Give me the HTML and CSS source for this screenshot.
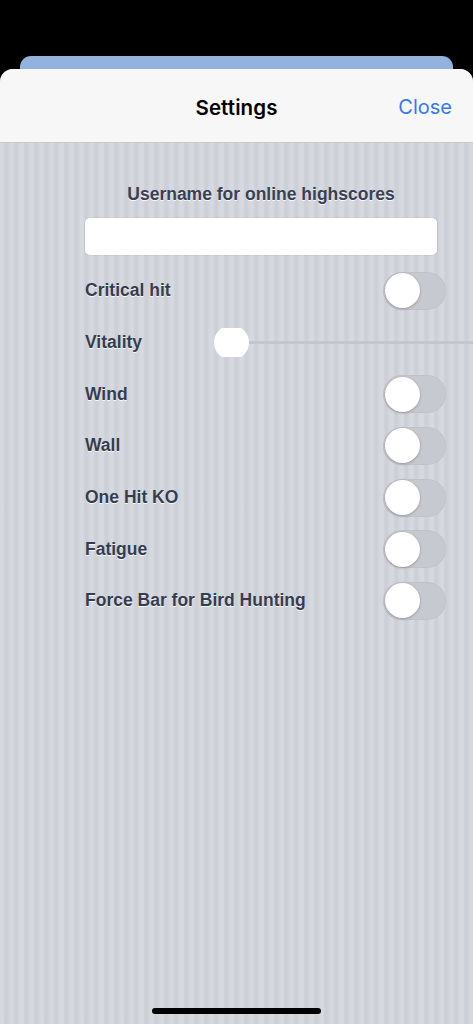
FILE: index.html
```html
<!DOCTYPE html>
<html>
<head>
<meta charset="utf-8">
<link rel="stylesheet" href="styles.css">
</head>
<body>
<div class="screen">
  <div class="status"></div>
  <div class="back-card"></div>
  <div class="sheet">
    <header class="nav">
      <span class="nav-side"></span>
      <h1 class="nav-title">Settings</h1>
      <a class="nav-close">Close</a>
    </header>
    <main class="content">
      <div class="caption">Username for online highscores</div>
      <div class="field"></div>
      <div class="rows">
        <div class="row"><span class="label">Critical hit</span><span class="switch"><span class="knob"></span></span></div>
        <div class="row row-slider"><span class="label">Vitality</span>
          <span class="slider"><span class="thumb-clip"><span class="thumb"></span></span><span class="track"></span></span>
        </div>
        <div class="row"><span class="label">Wind</span><span class="switch"><span class="knob"></span></span></div>
        <div class="row"><span class="label">Wall</span><span class="switch"><span class="knob"></span></span></div>
        <div class="row"><span class="label">One Hit KO</span><span class="switch"><span class="knob"></span></span></div>
        <div class="row"><span class="label">Fatigue</span><span class="switch"><span class="knob"></span></span></div>
        <div class="row"><span class="label">Force Bar for Bird Hunting</span><span class="switch"><span class="knob"></span></span></div>
      </div>
    </main>
    <div class="home-indicator"></div>
  </div>
</div>
</body>
</html>
```

FILE: styles.css
```css
html, body {
  margin: 0;
  padding: 0;
  background: #000;
}
.screen {
  width: 473px;
  height: 1024px;
  overflow: hidden;
  display: flex;
  flex-direction: column;
  font-family: "Liberation Sans", Arial, sans-serif;
}
.status {
  height: 56px;
  flex: none;
}
.back-card {
  flex: none;
  height: 24px;
  margin: 0 20px;
  background: #93b3de;
  border-radius: 11px 11px 0 0;
}
.sheet {
  position: relative;
  flex: 1;
  margin-top: -11px;
  border-radius: 13px 13px 0 0;
  overflow: hidden;
  background-color: #d2d5db;
  background-image: repeating-linear-gradient(90deg,
    #d5d8de 0px, #d6d9df 3px, #cdd0d7 5px, #ccd0d6 7px, #d5d8de 10px);
  display: flex;
  flex-direction: column;
}
.nav {
  flex: none;
  height: 74px;
  box-sizing: border-box;
  padding-top: 3px;
  background: #f7f7f7;
  border-bottom: 1px solid #c9c9cd;
  display: grid;
  grid-template-columns: 1fr auto 1fr;
  align-items: center;
}
.nav-title {
  margin: 0;
  font-family: Inter, "Liberation Sans", sans-serif;
  font-size: 20.5px;
  font-weight: 600;
  color: #000;
  letter-spacing: 0.1px;
}
.nav-close {
  justify-self: end;
  padding-right: 21px;
  font-family: Inter, "Liberation Sans", sans-serif;
  font-size: 20px;
  font-weight: 400;
  color: #3478f6;
}
.content {
  padding-top: 41px;
  display: flex;
  flex-direction: column;
}
.caption {
  margin-left: 85px;
  width: 352px;
  text-align: center;
  font-size: 17.5px;
  line-height: 20px;
  font-weight: 700;
  color: #3a4053;
  text-shadow: 0 1px 0 rgba(255,255,255,0.85);
}
.field {
  margin: 14px 0 0 85px;
  width: 352px;
  height: 37px;
  background: #fff;
  border-radius: 5px;
  box-shadow: 0 0 0 0.5px rgba(0,0,0,0.08);
}
.rows {
  margin-top: 10px;
  display: flex;
  flex-direction: column;
}
.row {
  height: 51.7px;
  display: flex;
  align-items: center;
  justify-content: space-between;
  padding: 0 27px 0 85px;
}
.label {
  font-size: 17.5px;
  font-weight: 700;
  color: #363c50;
  text-shadow: 0 1px 0 rgba(255,255,255,0.85);
}
.switch {
  position: relative;
  width: 63px;
  height: 38px;
  border-radius: 19px;
  background: #c6c9cf;
  box-shadow: inset 0 0 0 1px rgba(0,0,0,0.03);
  display: flex;
  align-items: center;
  padding-left: 1.5px;
  box-sizing: border-box;
}
.knob {
  width: 35px;
  height: 35px;
  border-radius: 50%;
  background: #fff;
  box-shadow: 0 1px 3px rgba(0,0,0,0.22), 0 0 0 0.5px rgba(0,0,0,0.06);
}
.row-slider {
  padding-right: 0;
  justify-content: flex-start;
}
.slider {
  margin-left: 71px;
  flex: 1;
  display: flex;
  align-items: center;
}
.thumb-clip {
  flex: none;
  width: 36px;
  height: 29px;
  overflow: hidden;
  display: flex;
  align-items: center;
  justify-content: center;
}
.thumb {
  flex: none;
  width: 35px;
  height: 35px;
  border-radius: 50%;
  background: #fff;
}
.track {
  flex: 1;
  height: 3px;
  background: #c3c6cc;
}
.home-indicator {
  position: absolute;
  left: 152px;
  bottom: 10px;
  width: 169px;
  height: 6px;
  border-radius: 3px;
  background: #000;
}
```
